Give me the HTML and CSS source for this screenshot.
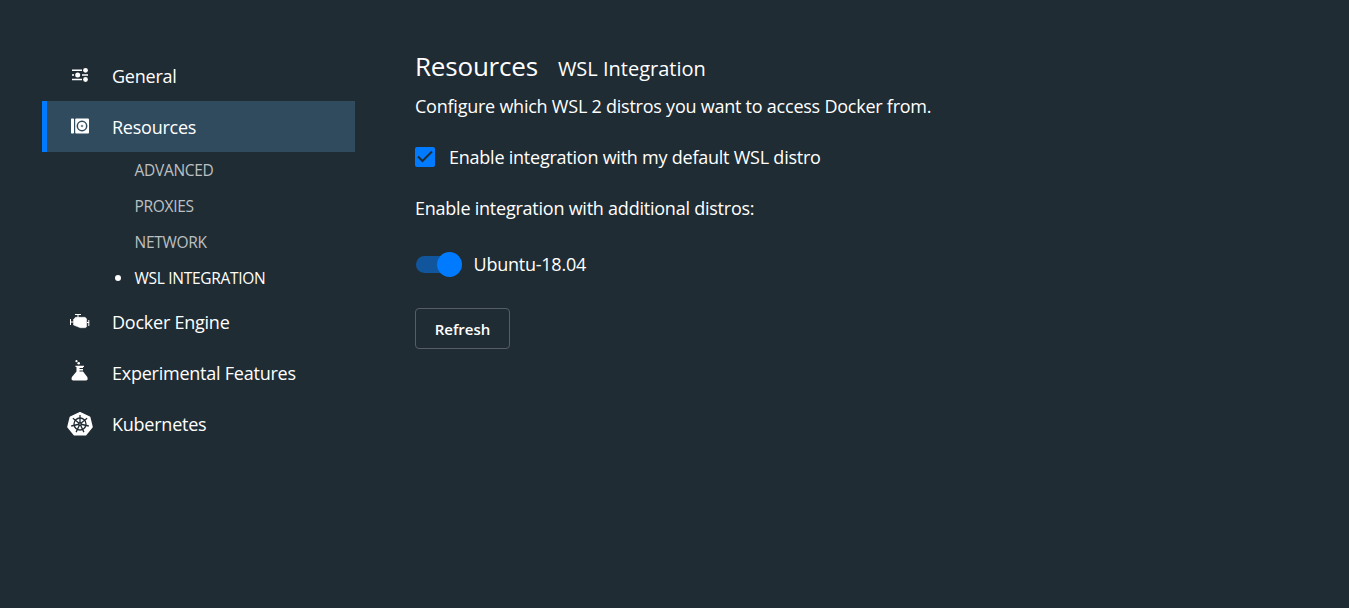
FILE: index.html
```html
<!DOCTYPE html>
<html lang="en">
<head>
<meta charset="utf-8">
<title>Settings</title>
<link rel="stylesheet" href="styles.css">
</head>
<body>
<div class="settings">
  <nav class="nav">
    <a class="item"><svg class="icon" width="26" height="26" viewBox="0 0 26 26"><g stroke="#fff" stroke-width="1.600"><path d="M5 7.300h10M5 12h2M15 12h6M5 16.500h10" /></g><g fill="#fff"><circle cx="18.500" cy="7.300" r="2.400"/><circle cx="10.700" cy="12" r="2.500"/><circle cx="18.500" cy="16.500" r="2.400"/></g></svg><span class="label">General</span></a>
    <a class="item active"><svg class="icon" width="26" height="26" viewBox="0 0 26 26"><rect x="4" y="4.500" width="3" height="15" rx=".7" fill="#fff"/><rect x="8.200" y="4.500" width="13.800" height="15" rx="1" fill="#fff"/><circle cx="15" cy="12" r="4.700" fill="none" stroke="#304b5d" stroke-width="1.500"/><circle cx="15" cy="12" r="1.300" fill="#7b8d99"/></svg><span class="label">Resources</span></a>
    <div class="sub">
      <a class="subitem">ADVANCED</a>
      <a class="subitem">PROXIES</a>
      <a class="subitem">NETWORK</a>
      <a class="subitem current"><i class="dot"></i>WSL INTEGRATION</a>
    </div>
    <a class="item"><svg class="icon" width="26" height="26" viewBox="0 0 26 26"><path d="M8 5.500h6M11 5v4M3.500 10v6M3.500 13h3M21.800 11v6M20 13.500h2" stroke="#fff" stroke-width="1" fill="none"/><path d="M8.500 8.300h9.500l1.600 1.500v8l-1.300.900h-5L9 17l-2.500-1v-5.500z" fill="#fff" stroke="#fff" stroke-width=".5"/></svg><span class="label">Docker Engine</span></a>
    <a class="item flask"><svg class="icon" width="26" height="26" viewBox="0 0 26 26"><g fill="#fff"><circle cx="9.500" cy="3.200" r="1.100"/><circle cx="11.700" cy="5.200" r="1.300"/><path d="M8.500 7.700H17V9h-1v4.500l4.300 5.500q1.200 3.500-1.600 3.500H6.500Q3.700 22.500 4.900 19l4.600-5.500V9h-1z"/></g><path d="M12.500 10.500h3.500M12.500 13h3.500" stroke="#202c34" stroke-width="1"/></svg><span class="label">Experimental Features</span></a>
    <a class="item"><svg class="icon" width="26" height="26" viewBox="0 0 26 26"><path d="M13 1.800 22.500 6.200 24.900 16l-6.300 7.700H7.400L1.100 16 3.500 6.200z" fill="#fff" stroke="#fff" stroke-width="1.800" stroke-linejoin="round"/><g fill="none" stroke="#202c34" stroke-width="1.300"><circle cx="13" cy="13" r="6"/><path d="M13 13V4M13 13l7.100-5.700M13 13l8.800 2M13 13l3.900 8.100M13 13l-3.900 8.100M13 13l-8.800 2M13 13 5.900 7.300"/></g><circle cx="13" cy="13" r="1.900" fill="#202c34"/><circle cx="13" cy="13" r=".6" fill="#fff"/></svg><span class="label">Kubernetes</span></a>
  </nav>
  <main class="content">
    <header class="heading"><h1 class="title">Resources</h1><h2 class="subtitle">WSL Integration</h2></header>
    <p class="text">Configure which WSL 2 distros you want to access Docker from.</p>
    <label class="check"><span class="box"><svg width="20" height="20" viewBox="0 0 20 20"><path d="m3 9.500 4.500 4.500L17 4.500" fill="none" stroke="#202c34" stroke-width="2"/></svg></span><span class="text">Enable integration with my default WSL distro</span></label>
    <p class="text">Enable integration with additional distros:</p>
    <label class="distro"><span class="track"><span class="thumb"></span></span><span class="text">Ubuntu-18.04</span></label>
    <button class="refresh">Refresh</button>
  </main>
</div>
</body>
</html>
```
FILE: styles.css
```css
* { box-sizing: border-box; }
body { margin: 0; min-height: 608px; background: #202c34; color: #fff; font-family: "Open Sans", "Noto Sans", sans-serif; font-size: 18px; }
.settings { display: flex; gap: 60px; padding: 50px 0 0 42px; }
.nav { width: 313px; flex: none; }
.item { display: flex; align-items: center; height: 51px; padding-left: 20px; border-left: 5px solid transparent; white-space: nowrap; }
.active { background: #304b5d; border-color: #007bff; }
.icon { flex: none; margin-right: 19px; }
.flask .icon { margin-bottom: 3px; }
.label { line-height: 27px; margin-top: 1px; letter-spacing: -.24px; }
.subitem { display: flex; align-items: center; height: 36px; padding: 0 0 1px 92.5px; font-size: 15.5px; letter-spacing: -.29px; color: #bcc0c2; white-space: nowrap; }
.current { color: #fff; padding-left: 72.5px; }
.dot { width: 6px; height: 6px; border-radius: 50%; background: #fff; margin-right: 14px; }
.content { display: flex; flex-direction: column; align-items: flex-start; margin-top: -1px; }
.heading { display: flex; align-items: baseline; gap: 20px; height: 44px; }
.title, .subtitle { margin: 0; font-weight: 400; white-space: nowrap; }
.title { font-size: 26px; line-height: 35px; letter-spacing: -.2px; }
.subtitle { font-size: 20px; }
.text { margin: 0; line-height: 27px; white-space: nowrap; letter-spacing: -.235px; }
.check { display: flex; align-items: center; gap: 14px; margin: 24px 0; }
.box { width: 20px; height: 20px; margin-bottom: 1px; border-radius: 2px; background: #007bff; }
.box svg { display: block; }
.distro { display: flex; align-items: center; gap: 11.5px; margin-top: 29px; }
.track { width: 46px; height: 17px; margin-left: 1px; border-radius: 9px; background: linear-gradient(90deg, #11559c 36px, transparent 36px); display: flex; justify-content: flex-end; align-items: center; }
.thumb { width: 25px; height: 25px; flex: none; border-radius: 50%; background: #007bff; }
.refresh { width: 95px; height: 41px; margin-top: 30px; padding: 1px 0 0; border: 1px solid #555e65; border-radius: 4px; background: transparent; color: #fff; font: 600 15px "Open Sans", sans-serif; }
```
